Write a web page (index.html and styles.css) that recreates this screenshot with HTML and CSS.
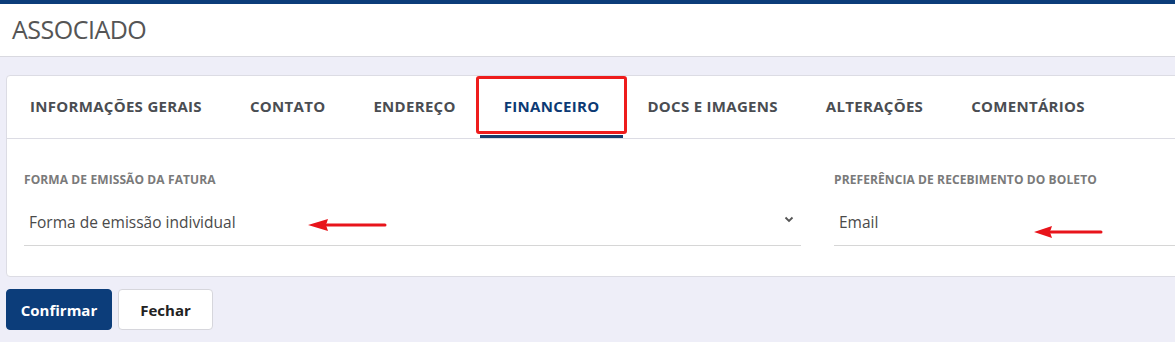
FILE: index.html
```html
<!DOCTYPE html>
<html lang="pt">
<head>
<meta charset="utf-8">
<link rel="stylesheet" href="styles.css">
</head>
<body>
<div class="topbar"></div>
<header class="header"><h1 class="title">ASSOCIADO</h1></header>
<main class="content">
  <section class="card">
    <nav class="tabs">
      <div class="tab">INFORMAÇÕES GERAIS</div>
      <div class="tab">CONTATO</div>
      <div class="tab">ENDEREÇO</div>
      <div class="tab active">FINANCEIRO<span class="highlight"></span></div>
      <div class="tab">DOCS E IMAGENS</div>
      <div class="tab">ALTERAÇÕES</div>
      <div class="tab">COMENTÁRIOS</div>
    </nav>
    <div class="form">
      <div class="field">
        <label class="label">FORMA DE EMISSÃO DA FATURA</label>
        <div class="select">
          <span class="value">Forma de emissão individual</span>
          <svg class="chevron" width="10" height="7" viewBox="0 0 10 7"><path d="M1.5 1.5 L5 5 L8.5 1.5" fill="none" stroke="#555" stroke-width="1.8"/></svg>
          <svg class="arrow arrow1" width="80" height="14" viewBox="0 0 80 14"><path d="M20 7 H78" stroke="#e8141b" stroke-width="3" stroke-linecap="round"/><path d="M1 7 L21 1 L19 7 L21 13 Z" fill="#e8141b"/></svg>
        </div>
      </div>
      <div class="field">
        <label class="label">PREFERÊNCIA DE RECEBIMENTO DO BOLETO</label>
        <div class="select">
          <span class="value">Email</span>
          <svg class="arrow arrow2" width="70" height="14" viewBox="0 0 70 14"><path d="M18 7 H68" stroke="#e8141b" stroke-width="3" stroke-linecap="round"/><path d="M1 7 L19 1 L17 7 L19 13 Z" fill="#e8141b"/></svg>
        </div>
      </div>
    </div>
  </section>
  <div class="actions">
    <button class="btn btn-primary">Confirmar</button>
    <button class="btn btn-default">Fechar</button>
  </div>
</main>
</body>
</html>
```
FILE: styles.css
```css
* { box-sizing: border-box; }
html, body { margin: 0; padding: 0; }
body {
  background: #eeeef8;
  font-family: "Open Sans", "Noto Sans", sans-serif;
  color: #444;
  width: 1175px;
  height: 342px;
  overflow: hidden;
}
.topbar { height: 4px; background: #0c3d7a; }
.header {
  height: 53px;
  background: #fff;
  border-bottom: 1px solid #d9d9e0;
  display: flex;
  align-items: center;
  padding-left: 12px;
}
.title {
  margin: 0;
  font-weight: 400;
  font-size: 25px;
  color: #555;
  letter-spacing: -0.5px;
  padding-bottom: 3px;
}
.content { padding: 18px 0 0 6px; }
.card {
  width: 1640px;
  background: #fff;
  border: 1px solid #dcdce4;
  border-radius: 4px;
  height: 202px;
}
.tabs {
  display: flex;
  height: 63px;
  border-bottom: 1px solid #dcdce4;
}
.tab {
  position: relative;
  padding: 0 24px 3px;
  display: flex;
  align-items: center;
  font-weight: 700;
  font-size: 15px;
  letter-spacing: 0.3px;
  color: #4a4d52;
}
.tab:first-child { padding-left: 23px; }
.tab.active {
  color: #0c3a74;
  border-bottom: 3px solid #163d6c;
  padding-bottom: 0;
}
.highlight {
  position: absolute;
  left: -4px;
  right: -4px;
  top: 0;
  height: 58px;
  border: 3px solid #ee1c1c;
  border-radius: 3px;
}
.form {
  display: grid;
  grid-template-columns: 777px 777px;
  column-gap: 33px;
  padding: 34px 0 0 17px;
}
.label {
  display: block;
  font-size: 12px;
  font-weight: 700;
  color: #7a7a7a;
  letter-spacing: 0.1px;
  height: 14px;
  line-height: 14px;
}
.select {
  position: relative;
  height: 59px;
  border-bottom: 1px solid #d6d6d6;
  display: flex;
  align-items: center;
  padding: 12px 5px 0 5px;
}
.value { font-size: 15.5px; color: #4a4a4a; }
.chevron { position: absolute; right: 7px; top: 29px; }
.arrow { position: absolute; }
.arrow1 { left: 283px; top: 31px; }
.arrow2 { left: 199px; top: 38px; }
.actions {
  display: flex;
  gap: 6px;
  padding-top: 12px;
}
.btn {
  height: 41px;
  border-radius: 4px;
  font-family: inherit;
  font-weight: 700;
  font-size: 15px;
  padding: 0 13px;
  cursor: pointer;
}
.btn-primary {
  background: #0c3d7a;
  color: #fff;
  border: 1px solid #0c3d7a;
  width: 106px;
}
.btn-default {
  background: #fff;
  color: #222;
  border: 1px solid #d6d6dc;
  width: 95px;
}
```
